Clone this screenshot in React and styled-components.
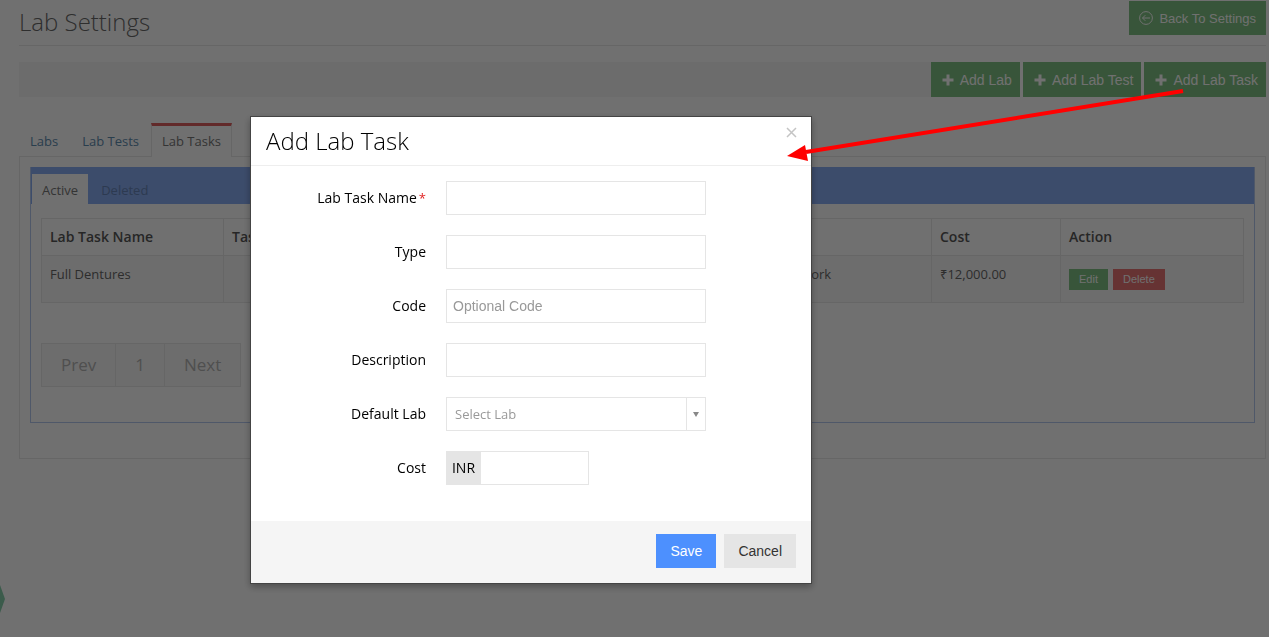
import React, { useState } from "react"
import styled, { createGlobalStyle } from "styled-components"

const sans = `"Open Sans", "Noto Sans", sans-serif`
const control = `"Liberation Sans", Arial, sans-serif`

const colors = {
  line: "#e8e8e8",
  green: "#7fc284",
  red: "#e87474",
  blue: "#8aadf3",
}

const GlobalStyle = createGlobalStyle`
  * {
    box-sizing: border-box;
  }

  body {
    margin: 0;
    background: #fff;
    color: #686868;
    font-family: ${sans};
    font-size: 13px;
    line-height: 20px;
    overflow: hidden;
  }

  button, input, select {
    font-family: ${control};
    font-size: 14px;
    border-radius: 0;
  }
`

/* ---------- page ---------- */

const Page = styled.main`
  isolation: isolate;
  padding: 0 3px 0 19px;
`

const PageHeader = styled.header`
  display: flex;
  justify-content: space-between;
  align-items: flex-start;
  height: 46px;
  padding-top: 1px;
  border-bottom: 1px solid ${colors.line};
`

const PageTitle = styled.h1`
  margin: 0;
  font-size: 24px;
  font-weight: 300;
  line-height: 42px;
  color: #6a6a6a;
`

const GreenButton = styled.button`
  display: flex;
  align-items: center;
  gap: 6px;
  height: ${({ $small }) => ($small ? "34px" : "35px")};
  padding: ${({ $small }) => ($small ? "0 10px" : "0 8px 0 11px")};
  border: 0;
  background: ${colors.green};
  color: #fff;
  font-size: ${({ $small }) => ($small ? "13px" : "14px")};
  cursor: pointer;
`

const Toolbar = styled.div`
  display: flex;
  justify-content: flex-end;
  margin-top: 16px;
  background: #f5f5f5;
`

const ToolbarActions = styled.div`
  display: flex;
  gap: 3px;
  background: #fff;
`

const Tabs = styled.nav`
  display: flex;
  margin-top: 26px;
  height: 34px;
`

const Tab = styled.a`
  padding: ${({ $active }) => ($active ? "5px 10px 0" : "5px 11px 0")};
  border: solid ${({ $active }) => ($active ? colors.line : "transparent")};
  border-width: 3px ${({ $active }) => ($active ? "1px" : "0")} 0;
  border-top-color: ${({ $active }) => ($active ? "#e06060" : "transparent")};
  background: ${({ $active }) => ($active ? "#fff" : "transparent")};
  color: ${({ $active }) => ($active ? "#777" : "#5f8db0")};
  text-decoration: none;
  z-index: 1;

  &:nth-child(2) {
    margin: 0 1px 0 2px;
  }
`

const Panel = styled.section`
  margin-top: -1px;
  padding: 10px 10px 35px;
  border: 1px solid ${colors.line};
`

const Portlet = styled.div`
  border: 1px solid #b4c8f0;
  border-top: 0;
`

const PortletBar = styled.nav`
  display: flex;
  align-items: flex-end;
  height: 37px;
  padding-left: 1px;
  background: ${colors.blue};
`

const PortletTab = styled.a`
  height: 30px;
  padding: 6px 10px 0;
  background: ${({ $active }) => ($active ? "#fff" : "transparent")};
  color: ${({ $active }) => ($active ? "#777" : "#6685b8")};
  text-decoration: none;

  & + & {
    margin-left: 3px;
  }
`

const PortletBody = styled.div`
  padding: 14px 10px 35px;
`

const Table = styled.table`
  width: 100%;
  table-layout: fixed;
  border-collapse: collapse;

  th, td {
    padding: 8px;
    border: 1px solid ${colors.line};
    text-align: left;
    vertical-align: top;
  }

  th {
    color: #585858;
    font-size: 14px;
    font-weight: 600;
  }

  td {
    height: 47px;
    background: #f9f9f9;
  }
`

const Col = styled.col`
  width: ${({ $width }) => $width};
`

const RowActions = styled.div`
  display: flex;
  gap: 5px;
  padding-top: 5px;
`

const MiniButton = styled.button`
  height: 21px;
  padding: 0 10px 2px;
  border: 0;
  background: ${({ $danger }) => ($danger ? colors.red : colors.green)};
  color: #fff;
  font-size: 11px;
`

const Pagination = styled.div`
  display: inline-flex;
  margin-top: 40px;
  border: 1px solid ${colors.line};
  background: #f9f9f9;
  vertical-align: top;
`

const PageLink = styled.a`
  padding: 11px 19px;
  color: #b4b4b4;
  font-size: 17px;
  text-decoration: none;

  & + & {
    border-left: 1px solid ${colors.line};
  }
`

const EdgeHandle = styled.svg`
  position: fixed;
  left: 0;
  top: 585px;
`

/* ---------- modal ---------- */

const Backdrop = styled.div`
  position: fixed;
  inset: 0;
  background: rgba(0, 0, 0, 0.56);
`

const Modal = styled.form`
  width: 562px;
  margin: 116px 0 0 250px;
  border: 1px solid #444;
  background: #fff;
  background-clip: padding-box;
  box-shadow: 0 3px 7px rgba(0, 0, 0, 0.3);
  color: #000;
`

const ModalHeader = styled.header`
  display: flex;
  justify-content: space-between;
  align-items: flex-start;
  height: 49px;
  padding: 9px 14px 9px 15px;
  border-bottom: 1px solid #eee;
`

const ModalTitle = styled.h2`
  margin: 0;
  font-size: 24px;
  font-weight: 300;
  line-height: 30px;
`

const CloseButton = styled.button`
  display: flex;
  padding: 1px 0;
  border: 0;
  background: none;
`

const ModalBody = styled.div`
  display: grid;
  gap: 20px;
  padding: 15px 15px 36px;
`

const Field = styled.div`
  display: grid;
  grid-template-columns: 160px 1fr;
  column-gap: 20px;
  align-items: center;
`

const Label = styled.label`
  font-size: 14px;
  text-align: right;
`

const Required = styled.span`
  padding-left: 2px;
  color: #e02222;
  font-size: 13px;
`

const Input = styled.input`
  width: 260px;
  height: 34px;
  padding: 0 6px;
  border: 1px solid #e5e5e5;
  background: #fff;
  outline: 0;

  &::placeholder {
    color: #999;
  }
`

const CostInput = styled(Input)`
  width: 108px;
  border-left: 0;
`

const SelectBox = styled.div`
  display: grid;
  grid-template-columns: 1fr 19px;
  width: 260px;
  height: 34px;
  border: 1px solid #e5e5e5;
`

const Select = styled.select`
  grid-area: 1 / 1 / 2 / 3;
  padding: 0 8px;
  border: 0;
  background: none;
  color: #999;
  font-family: ${sans};
  font-size: 13px;
  appearance: none;
  outline: 0;
`

const SelectArrow = styled.span`
  grid-area: 1 / 2;
  display: flex;
  align-items: center;
  justify-content: center;
  border-left: 1px solid #e5e5e5;
  pointer-events: none;
`

const CostBox = styled.div`
  display: flex;
`

const Currency = styled.span`
  width: 35px;
  background: #e5e5e5;
  font-size: 14px;
  line-height: 34px;
  text-align: center;
`

const ModalFooter = styled.footer`
  display: flex;
  justify-content: flex-end;
  gap: 8px;
  padding: 13px 15px 15px;
  background: #f5f5f5;
`

const FooterButton = styled.button`
  height: 34px;
  padding: 0 14px;
  border: 0;
  background: ${({ $primary }) => ($primary ? "#4d90fe" : "#e5e5e5")};
  color: ${({ $primary }) => ($primary ? "#fff" : "#333")};
`

const Pointer = styled.svg`
  position: absolute;
  left: 787px;
  top: 88px;
  pointer-events: none;
`

const PlusIcon = () => (
  <svg width="12" height="12" viewBox="0 0 12 12" fill="currentColor">
    <path d="M4.5 .5h3v4h4v3h-4v4h-3v-4h-4v-3h4z" />
  </svg>
)

const BackIcon = () => (
  <svg width="14" height="14" viewBox="0 0 14 14" fill="none" stroke="currentColor">
    <circle cx="7" cy="7" r="6.4" />
    <path d="M11 7H3.5M6.3 4.2L3.5 7l2.8 2.8" />
  </svg>
)

const textFields = [
  { id: "name", label: "Lab Task Name", required: true },
  { id: "type", label: "Type" },
  { id: "code", label: "Code", placeholder: "Optional Code" },
  { id: "description", label: "Description" },
]

const tasks = [
  { name: "Full Dentures", type: "", lab: "Dental Work", cost: "₹12,000.00" },
]

function LabTaskModal() {
  const [values, setValues] = useState({})

  const handleChange = (e) => {
    setValues({ ...values, [e.target.id]: e.target.value })
  }

  return (
    <Modal role="dialog" aria-labelledby="modal-title" onSubmit={(e) => e.preventDefault()}>
      <ModalHeader>
        <ModalTitle id="modal-title">Add Lab Task</ModalTitle>
        <CloseButton type="button" aria-label="Close">
          <svg width="11" height="11" viewBox="0 0 11 11" stroke="#c4c4c4" strokeWidth="1.5">
            <path d="M1 1l9 9M10 1l-9 9" />
          </svg>
        </CloseButton>
      </ModalHeader>
      <ModalBody>
        {textFields.map((field) => (
          <Field key={field.id}>
            <Label htmlFor={field.id}>
              {field.label}
              {field.required && <Required>*</Required>}
            </Label>
            <Input
              id={field.id}
              type="text"
              placeholder={field.placeholder}
              value={values[field.id] || ""}
              onChange={handleChange}
            />
          </Field>
        ))}
        <Field>
          <Label htmlFor="lab">Default Lab</Label>
          <SelectBox>
            <Select id="lab" value={values.lab || ""} onChange={handleChange}>
              <option value="">Select Lab</option>
            </Select>
            <SelectArrow>
              <svg width="6" height="5" viewBox="0 0 6 5" fill="#888">
                <path d="M0 0h6L3 5z" />
              </svg>
            </SelectArrow>
          </SelectBox>
        </Field>
        <Field>
          <Label htmlFor="cost">Cost</Label>
          <CostBox>
            <Currency>INR</Currency>
            <CostInput id="cost" type="text" value={values.cost || ""} onChange={handleChange} />
          </CostBox>
        </Field>
      </ModalBody>
      <ModalFooter>
        <FooterButton type="submit" $primary>Save</FooterButton>
        <FooterButton type="button">Cancel</FooterButton>
      </ModalFooter>
    </Modal>
  )
}

export default function App() {
  return (
    <>
      <GlobalStyle />
      <Page>
        <PageHeader>
          <PageTitle>Lab Settings</PageTitle>
          <GreenButton $small type="button"><BackIcon />Back To Settings</GreenButton>
        </PageHeader>
        <Toolbar>
          <ToolbarActions>
            <GreenButton type="button"><PlusIcon />Add Lab</GreenButton>
            <GreenButton type="button"><PlusIcon />Add Lab Test</GreenButton>
            <GreenButton type="button"><PlusIcon />Add Lab Task</GreenButton>
          </ToolbarActions>
        </Toolbar>
        <Tabs>
          <Tab href="#labs">Labs</Tab>
          <Tab href="#tests">Lab Tests</Tab>
          <Tab href="#tasks" $active>Lab Tasks</Tab>
        </Tabs>
        <Panel>
          <Portlet>
            <PortletBar>
              <PortletTab href="#active" $active>Active</PortletTab>
              <PortletTab href="#deleted">Deleted</PortletTab>
            </PortletBar>
            <PortletBody>
              <Table>
                <colgroup>
                  <Col $width="182px" />
                  <Col />
                  <Col $width="184px" />
                  <Col $width="129px" />
                  <Col $width="183px" />
                </colgroup>
                <thead>
                  <tr>
                    <th>Lab Task Name</th>
                    <th>Task Type</th>
                    <th>Lab</th>
                    <th>Cost</th>
                    <th>Action</th>
                  </tr>
                </thead>
                <tbody>
                  {tasks.map((task) => (
                    <tr key={task.name}>
                      <td>{task.name}</td>
                      <td>{task.type}</td>
                      <td>{task.lab}</td>
                      <td>{task.cost}</td>
                      <td>
                        <RowActions>
                          <MiniButton type="button">Edit</MiniButton>
                          <MiniButton type="button" $danger>Delete</MiniButton>
                        </RowActions>
                      </td>
                    </tr>
                  ))}
                </tbody>
              </Table>
              <Pagination>
                <PageLink href="#prev">Prev</PageLink>
                <PageLink href="#1">1</PageLink>
                <PageLink href="#next">Next</PageLink>
              </Pagination>
            </PortletBody>
          </Portlet>
        </Panel>
      </Page>
      <EdgeHandle width="5" height="28" viewBox="0 0 5 28" fill="#86d0ac">
        <path d="M0 0l5 14-5 14z" />
      </EdgeHandle>
      <Backdrop>
        <LabTaskModal />
        <Pointer width="400" height="76" viewBox="0 0 400 76">
          <path d="M396 3L19 64" stroke="#f00" strokeWidth="4" />
          <path d="M0 68L18 57l3 16z" fill="#f00" />
        </Pointer>
      </Backdrop>
    </>
  )
}
